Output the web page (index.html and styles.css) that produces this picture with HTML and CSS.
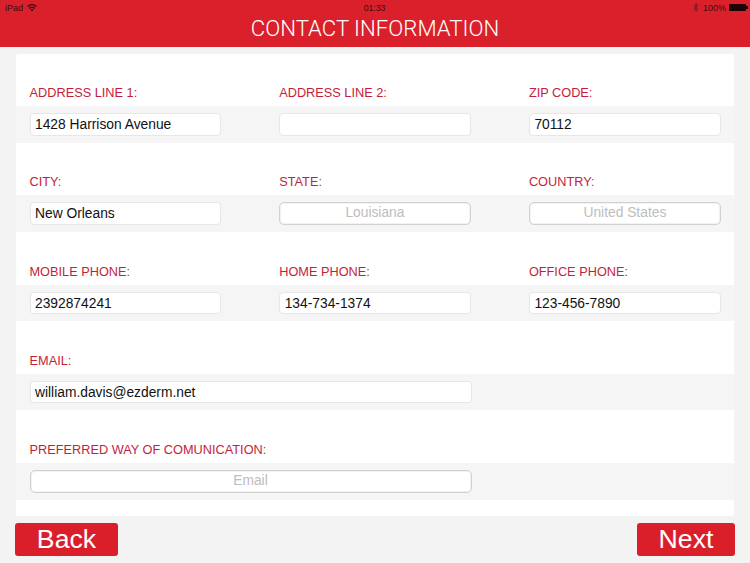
FILE: index.html
```html
<!DOCTYPE html>
<html lang="en">
<head>
<meta charset="utf-8">
<title>Contact Information</title>
<link rel="stylesheet" href="styles.css">
</head>
<body>
<div class="screen">
  <header class="header">
    <div class="status">
      <div class="status-left">
        <span>iPad</span>
        <svg class="wifi" width="10" height="8" viewBox="0 0 10 8"><path d="M5 7.6 3.4 5.7a2.4 2.4 0 0 1 3.2 0zM2.6 4.9l-.9-1a5 5 0 0 1 6.600 0l-.9 1a3.700 3.700 0 0 0-4.800 0zM1 3.100 0 2a7.500 7.500 0 0 1 10 0L9 3.100a6.100 6.100 0 0 0-8 0z" fill="#3a1014"/></svg>
      </div>
      <span class="status-time">01:33</span>
      <div class="status-right">
        <svg class="bt" width="6" height="9" viewBox="0 0 6 9"><path d="M.6 2.400 5 6.500 2.900 8.400V.6L5 2.500.6 6.600" fill="none" stroke="#5a1a1e" stroke-width=".8"/></svg>
        <span>100%</span>
        <div class="battery"><div class="battery-fill"></div></div>
      </div>
    </div>
    <h1 class="title">CONTACT INFORMATION</h1>
  </header>

  <main class="card">
    <section class="group">
      <div class="labels">
        <span class="label">ADDRESS LINE 1:</span>
        <span class="label">ADDRESS LINE 2:</span>
        <span class="label">ZIP CODE:</span>
      </div>
      <div class="band">
        <div class="field">1428 Harrison Avenue</div>
        <div class="field"></div>
        <div class="field">70112</div>
      </div>
    </section>
    <section class="group">
      <div class="labels">
        <span class="label">CITY:</span>
        <span class="label">STATE:</span>
        <span class="label">COUNTRY:</span>
      </div>
      <div class="band">
        <div class="field">New Orleans</div>
        <div class="field select">Louisiana</div>
        <div class="field select">United States</div>
      </div>
    </section>
    <section class="group">
      <div class="labels">
        <span class="label">MOBILE PHONE:</span>
        <span class="label">HOME PHONE:</span>
        <span class="label">OFFICE PHONE:</span>
      </div>
      <div class="band">
        <div class="field">2392874241</div>
        <div class="field">134-734-1374</div>
        <div class="field">123-456-7890</div>
      </div>
    </section>
    <section class="group">
      <div class="labels">
        <span class="label wide">EMAIL:</span>
      </div>
      <div class="band">
        <div class="field wide">william.davis@ezderm.net</div>
      </div>
    </section>
    <section class="group">
      <div class="labels">
        <span class="label wide">PREFERRED WAY OF COMUNICATION:</span>
      </div>
      <div class="band">
        <div class="field select wide">Email</div>
      </div>
    </section>
  </main>

  <footer class="footer">
    <button class="btn btn-back">Back</button>
    <button class="btn btn-next">Next</button>
  </footer>
</div>
</body>
</html>
```
FILE: styles.css
```css
* { box-sizing: border-box; }
html, body { margin: 0; padding: 0; }
body {
  background: #f3f3f3;
  font-family: "Liberation Sans", Arial, sans-serif;
  overflow: hidden;
}
.screen {
  width: 750px;
  height: 563px;
  display: flex;
  flex-direction: column;
}
.header {
  height: 47px;
  background: #da212b;
  flex: none;
}
.status {
  height: 15px;
  padding: 0 4px 0 5px;
  display: grid;
  grid-template-columns: 1fr auto 1fr;
  align-items: center;
  font-size: 9px;
  color: #3a0c10;
}
.status-left { display: flex; align-items: center; gap: 4px; }
.status-time { font-size: 8.700px; margin-left: -2px; }
.status-right { display: flex; align-items: center; justify-content: flex-end; gap: 3px; }
.bt { margin-right: 1px; }
.battery {
  width: 17px;
  height: 7px;
  background: #1c0406;
  border-radius: 1px;
  position: relative;
}
.battery-fill {
  position: absolute;
  right: -1.5px;
  top: 2px;
  width: 1.5px;
  height: 3px;
  background: #1c0406;
}
.title {
  margin: 0;
  height: 26px;
  line-height: 26px;
  text-align: center;
  color: #fff;
  font-family: Roboto, "Liberation Sans", sans-serif;
  font-weight: 300;
  font-size: 22.200px;
}
.card {
  margin: 7px 16px 0;
  height: 462px;
  background: #fff;
  border-radius: 3px;
  flex: none;
}
.group {
  height: 89.33px;
  display: flex;
  flex-direction: column;
}
.labels, .band {
  display: grid;
  grid-template-columns: 191.500px 191.500px 192px;
  column-gap: 58.200px;
  padding: 0 13px 0 13.500px;
}
.labels {
  height: 52px;
  flex: none;
  align-items: end;
  padding-bottom: 6px;
}
.band {
  height: 36.500px;
  flex: none;
  align-items: center;
  background: #f5f5f5;
}
.label {
  font-size: 12.750px;
  line-height: 14px;
  color: #c41e3a;
}
.field {
  height: 22.500px;
  line-height: 21px;
  padding: 0 4.500px;
  font-size: 13.800px;
  color: #111;
  background: #fff;
  border: 1px solid #e6e6e6;
  border-radius: 4px;
}
.select {
  line-height: 19px;
  text-align: center;
  color: #bdbdbd;
  border-color: #d0d0d0;
  border-radius: 5px;
  box-shadow: inset 0 0 0 1px #f2f2f2;
}
.wide { grid-column: span 2; }
.field.wide { width: 442px; }
.footer {
  flex: 1;
  display: flex;
  justify-content: space-between;
  align-items: flex-start;
  padding: 7px 15px 0;
}
.btn {
  height: 33px;
  border: 0;
  border-radius: 3px;
  background: #da1f2b;
  color: #fff;
  font-family: "Liberation Sans", Arial, sans-serif;
  font-size: 26.700px;
  line-height: 31px;
  padding: 0;
  text-align: center;
}
.btn-back { width: 103px; }
.btn-next { width: 98px; }
```
